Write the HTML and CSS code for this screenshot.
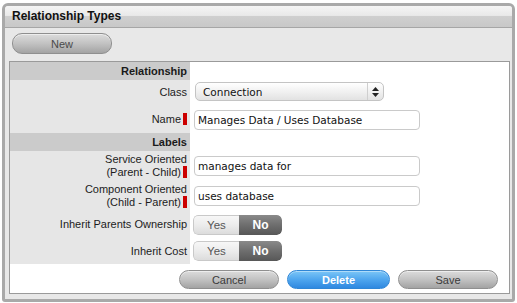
FILE: index.html
```html
<!DOCTYPE html>
<html>
<head>
    <title>Relationship Types</title>
    <link rel="stylesheet" href="styles.css">
</head>
<body>

<div class="panel">
    <div class="panel-head">Relationship Types</div>

    <div class="toolbar">
        <button class="btn btn-gray btn-new">New</button>
    </div>

    <div class="form-box">
        <div class="form-grid">
            <div class="sec row-sec">Relationship</div>
            <div class="val"></div>

            <div class="lbl row-class">Class</div>
            <div class="val">
                <div class="select">
                    <span class="select-text">Connection</span>
                    <span class="select-arrows">
                        <svg width="7" height="10" viewBox="0 0 7 10">
                            <path d="M3.5 0 L7 4 L0 4 Z M0 6 L7 6 L3.5 10 Z" fill="#222"/>
                        </svg>
                    </span>
                </div>
            </div>

            <div class="lbl row-name">Name<span class="req"></span></div>
            <div class="val"><input class="field" type="text" value="Manages Data / Uses Database"></div>

            <div class="sec row-sec">Labels</div>
            <div class="val"></div>

            <div class="lbl row-service">Service Oriented<br>(Parent - Child)<span class="req"></span></div>
            <div class="val"><input class="field" type="text" value="manages data for"></div>

            <div class="lbl row-component">Component Oriented<br>(Child - Parent)<span class="req"></span></div>
            <div class="val"><input class="field" type="text" value="uses database"></div>

            <div class="lbl row-owner">Inherit Parents Ownership</div>
            <div class="val">
                <div class="toggle"><span class="tg-yes">Yes</span><span class="tg-no">No</span></div>
            </div>

            <div class="lbl row-cost">Inherit Cost</div>
            <div class="val">
                <div class="toggle"><span class="tg-yes">Yes</span><span class="tg-no">No</span></div>
            </div>
        </div>

        <div class="actions">
            <button class="btn btn-gray btn-act">Cancel</button>
            <button class="btn btn-blue btn-act btn-delete">Delete</button>
            <button class="btn btn-gray btn-act">Save</button>
        </div>
    </div>
</div>

</body>
</html>
```

FILE: styles.css
```css
body {
    margin: 0;
    padding: 3px 2px 0 2px;
    background-color: white;
    font-family: "Liberation Sans", Arial, sans-serif;
    color: #1c1c1c;
}

.panel {
    width: 513px;
    height: 299px;
    box-sizing: border-box;
    border: 3px solid #a9a9a9;
    border-radius: 6px 6px 3px 3px;
    background-color: #e8e8e8;
    display: flex;
    flex-direction: column;
}

.panel-head {
    height: 21px;
    line-height: 21px;
    padding-left: 7px;
    font-size: 12px;
    font-weight: bold;
    color: #111;
    border-bottom: 1px solid #a6a6a6;
    border-radius: 3px 3px 0 0;
    background: linear-gradient(#f5f5f5, #e9e9e9 45%, #cfcfcf 50%, #c8c8c8);
}

.toolbar {
    height: 33px;
    box-sizing: border-box;
    padding: 5px 0 0 7px;
}

.btn {
    font-family: "Liberation Sans", Arial, sans-serif;
    font-size: 11px;
    border-radius: 10px;
    cursor: pointer;
    padding: 0;
}

.btn-gray {
    color: #3a3a3a;
    border: 1px solid #8f8f8f;
    background: linear-gradient(#dcdcdc, #c2c2c2 50%, #a3a3a3);
    box-shadow: inset 0 1px 0 rgba(255, 255, 255, 0.5);
}

.btn-blue {
    color: white;
    font-weight: bold;
    border: 1px solid #2f86d6;
    background: linear-gradient(#7cc6f7, #4fa6ee 50%, #2f88e0);
    box-shadow: inset 0 1px 0 rgba(255, 255, 255, 0.4);
}

.btn-new {
    width: 100px;
    height: 21px;
    color: #4a4a4a;
}

.form-box {
    width: 501px;
    box-sizing: border-box;
    margin-left: 4px;
    height: 233px;
    border: 1px solid #9a9a9a;
    background-color: white;
    display: flex;
    flex-direction: column;
}

.form-grid {
    display: grid;
    grid-template-columns: 180px 1fr;
    grid-template-rows: 18px 25px 28px 18px 31px 29px 27px 26px;
}

.sec, .lbl {
    display: flex;
    justify-content: flex-end;
    text-align: right;
    padding-right: 3px;
    font-size: 11px;
}

.sec {
    align-items: center;
    background-color: #cbcbcb;
    font-weight: bold;
    color: #1a1a1a;
}

.lbl {
    align-items: center;
    background-color: #e6e6e6;
    line-height: 13px;
}

.row-service, .row-component {
    display: block;
    align-self: stretch;
    padding-top: 2px;
}

.row-component {
    padding-top: 1px;
}

.req {
    display: inline-block;
    width: 4px;
    height: 12px;
    margin-left: 2px;
    background-color: #cc0000;
    vertical-align: -2px;
}

.val {
    display: flex;
    align-items: center;
    padding-left: 4px;
}

.select {
    width: 189px;
    height: 19px;
    box-sizing: border-box;
    margin-left: 1px;
    margin-top: -2px;
    border: 1px solid #c4c4c4;
    border-radius: 5px;
    background: linear-gradient(#ffffff, #f1f1f1 50%, #e2e2e2);
    display: flex;
    align-items: center;
    font-family: "DejaVu Sans", Verdana, sans-serif;
    font-size: 10.5px;
    color: #111;
}

.select-text {
    flex: 1;
    padding-left: 7px;
}

.select-arrows {
    width: 15px;
    height: 100%;
    border-left: 1px solid #cfcfcf;
    display: flex;
    align-items: center;
    justify-content: center;
}

.field {
    width: 226px;
    height: 20px;
    box-sizing: border-box;
    border: 1px solid #cacaca;
    border-radius: 4px;
    padding: 0 3px;
    font-family: "DejaVu Sans", Verdana, sans-serif;
    font-size: 10.5px;
    color: #111;
    background-color: white;
}

.row-service + .val, .row-component + .val {
    align-items: flex-start;
}

.row-service + .val .field {
    margin-top: 5px;
}

.row-component + .val .field {
    margin-top: 4px;
}

.row-name + .val .field {
    margin-top: 1px;
}

.toggle {
    display: flex;
    width: 89px;
    height: 20px;
    margin-left: -1px;
    border-radius: 5px;
    overflow: hidden;
    font-size: 11.5px;
    line-height: 20px;
    text-align: center;
}

.tg-yes {
    width: 46px;
    box-sizing: border-box;
    color: #555;
    border: 1px solid #c9c9c9;
    border-right: none;
    border-radius: 5px 0 0 5px;
    line-height: 18px;
    background: linear-gradient(#f7f7f7, #ececec 50%, #dcdcdc);
}

.tg-no {
    flex: 1;
    color: white;
    font-weight: bold;
    font-size: 12px;
    background: linear-gradient(#8a8a8a, #6e6e6e 50%, #575757);
    border-radius: 0 5px 5px 0;
}

.actions {
    display: flex;
    justify-content: flex-end;
    gap: 8px;
    padding: 6px 11px 0 0;
}

.btn-act {
    width: 100px;
    height: 19px;
}

.btn-delete {
    width: 103px;
}
```
